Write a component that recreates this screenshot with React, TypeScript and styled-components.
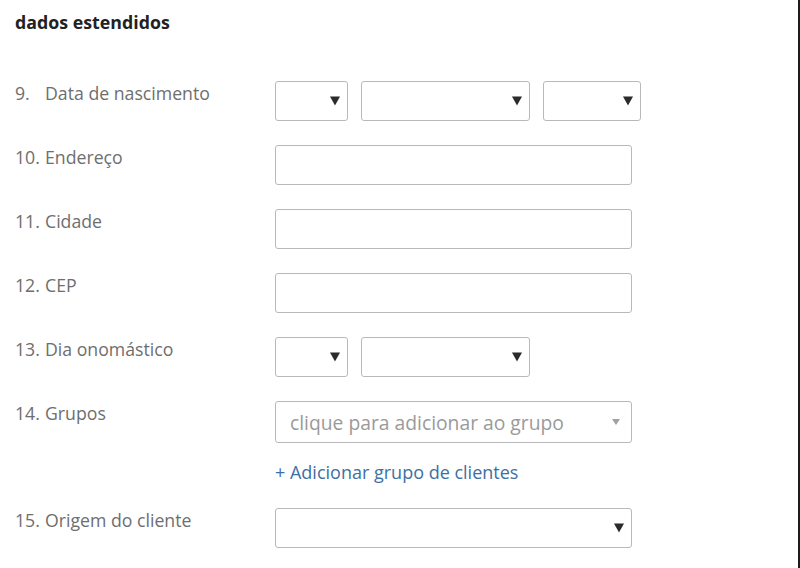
import React from "react";
import styled, {createGlobalStyle} from "styled-components";

const GlobalStyle = createGlobalStyle`
    html, body {
        margin: 0;
        padding: 0;
        background: #ffffff;
    }
    body {
        font-family: "Open Sans", "Liberation Sans", sans-serif;
    }
`

type Field =
    | { kind: "input" }
    | { kind: "selects"; widths: number[] }
    | { kind: "groups" }
    | { kind: "select" }

const rows: { num: string; label: string; field: Field }[] = [
    {num: "9.", label: "Data de nascimento", field: {kind: "selects", widths: [73, 169, 98]}},
    {num: "10.", label: "Endereço", field: {kind: "input"}},
    {num: "11.", label: "Cidade", field: {kind: "input"}},
    {num: "12.", label: "CEP", field: {kind: "input"}},
    {num: "13.", label: "Dia onomástico", field: {kind: "selects", widths: [73, 169]}},
    {num: "14.", label: "Grupos", field: {kind: "groups"}},
    {num: "15.", label: "Origem do cliente", field: {kind: "select"}},
];

const renderField = (field: Field) => {
    switch (field.kind) {
        case "input":
            return <StyledInput type="text"/>;
        case "selects":
            return (
                <SelectGroup>
                    {field.widths.map((w, i) => (
                        <SelectBox key={i} $width={w}/>
                    ))}
                </SelectGroup>
            );
        case "groups":
            return (
                <FieldColumn>
                    <SelectBox $width={357} $tall $light>
                        <Placeholder>clique para adicionar ao grupo</Placeholder>
                    </SelectBox>
                    <AddLink href="#">+ Adicionar grupo de clientes</AddLink>
                </FieldColumn>
            );
        case "select":
            return <SelectBox $width={357}/>;
    }
};

export default function App() {
    return (
        <>
            <GlobalStyle/>
            <StyledPage>
                <StyledTitle>dados estendidos</StyledTitle>
                <StyledForm>
                    {rows.map((row) => (
                        <StyledRow key={row.num}>
                            <StyledLabel>
                                <Num>{row.num}</Num>
                                {row.label}
                            </StyledLabel>
                            {renderField(row.field)}
                        </StyledRow>
                    ))}
                </StyledForm>
            </StyledPage>
        </>
    );
}

const StyledPage = styled.div`
    box-sizing: border-box;
    width: 800px;
    height: 568px;
    padding: 10px 0 0 15px;
    border-right: 2px solid #1c1c1c;
    background: #ffffff;
    overflow: hidden;
`
const StyledTitle = styled.h2`
    margin: 0;
    font-size: 17.8px;
    line-height: 24px;
    font-weight: 700;
    color: #222222;
`
const StyledForm = styled.div`
    display: flex;
    flex-direction: column;
    gap: 24px;
    margin-top: 47px;
`
const StyledRow = styled.div`
    display: flex;
    align-items: flex-start;
`
const StyledLabel = styled.div`
    width: 260px;
    flex-shrink: 0;
    font-size: 17.7px;
    line-height: 24px;
    color: #6e6e6e;
`
const Num = styled.span`
    display: inline-block;
    width: 30px;
`
const StyledInput = styled.input`
    box-sizing: border-box;
    width: 357px;
    height: 40px;
    border: 1px solid #b9b9b9;
    border-radius: 3px;
    padding: 0 12px;
    font: inherit;
    outline: none;
    background: #ffffff;
`
const SelectGroup = styled.div`
    display: flex;
    gap: 13px;
`
const FieldColumn = styled.div`
    display: flex;
    flex-direction: column;
    align-items: flex-start;
    gap: 17px;
`
const SelectBox = styled.div<{ $width: number; $tall?: boolean; $light?: boolean }>`
    box-sizing: border-box;
    position: relative;
    display: flex;
    align-items: center;
    width: ${p => p.$width}px;
    height: ${p => (p.$tall ? 42 : 40)}px;
    padding: 0 14px;
    border: 1px solid #b9b9b9;
    border-radius: 3px;
    background: #ffffff;

    &::after {
        content: "";
        position: absolute;
        right: ${p => (p.$light ? 11 : 7)}px;
        top: 50%;
        transform: translateY(-50%);
        border-left: ${p => (p.$light ? 4 : 5)}px solid transparent;
        border-right: ${p => (p.$light ? 4 : 5)}px solid transparent;
        border-top: ${p => (p.$light ? 6 : 9)}px solid ${p => (p.$light ? "#a0a0a0" : "#2b2b2b")};
    }
`
const Placeholder = styled.span`
    font-size: 19.3px;
    color: #9a9a9a;
    white-space: nowrap;
`
const AddLink = styled.a`
    font-size: 18px;
    line-height: 24px;
    color: #3d6fa3;
    text-decoration: none;
`
